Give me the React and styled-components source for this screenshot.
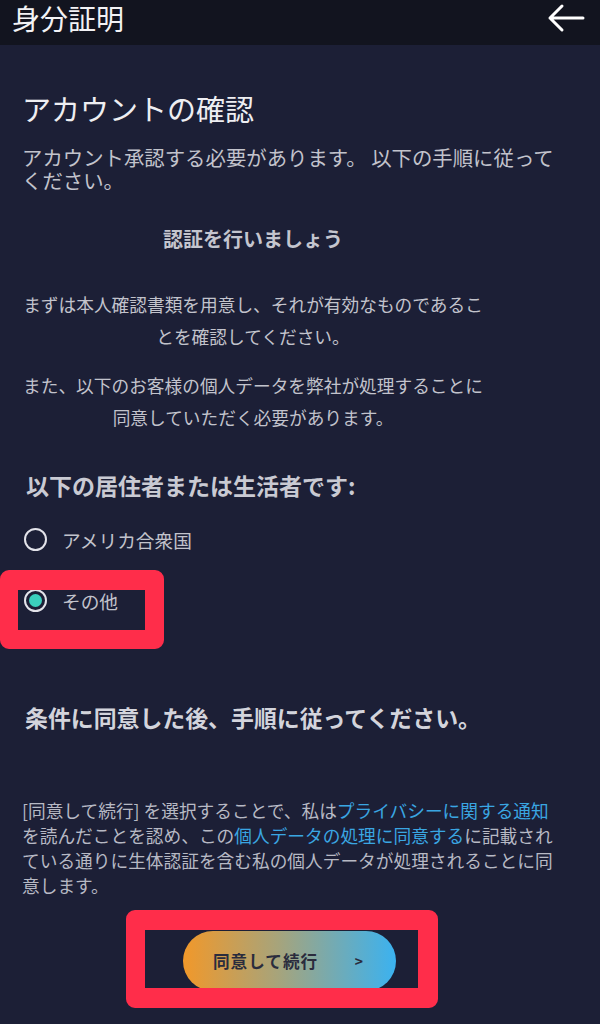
import React from "react";
import styled, { createGlobalStyle } from "styled-components";

const Global = createGlobalStyle`
  html, body { margin: 0; padding: 0; background: #1c1f36; }
  body { font-family: "Noto Sans CJK JP", "Noto Sans", sans-serif; }
`;

const Page = styled.div`
  position: relative;
  width: 600px;
  height: 1024px;
  overflow: hidden;
  background: #1c1f36;
  color: #c9cad3;
`;

const Header = styled.header`
  height: 45px;
  background: #12141f;
  display: flex;
  align-items: flex-start;
  justify-content: space-between;
  padding: 1px 14px 0 12px;
  box-sizing: border-box;
`;

const HeaderTitle = styled.h1`
  margin: 0;
  font-size: 28px;
  line-height: 34px;
  font-weight: 400;
  color: #f2f2f5;
`;

const BackIcon = styled.svg`
  width: 40px;
  height: 30px;
  margin-top: 2px;
`;

const Content = styled.main`
  padding: 0 22px;
  display: flex;
  flex-direction: column;
`;

const Title = styled.h2`
  margin: 44px 0 0;
  font-size: 29px;
  line-height: 38px;
  font-weight: 400;
  color: #eeeef2;
`;

const Lead = styled.p`
  margin: 19px 0 0;
  width: 545px;
  font-size: 20.4px;
  line-height: 23px;
  color: #c2c3cc;
`;

const Subhead = styled.h3`
  margin: 33px 0 0;
  width: 462px;
  text-align: center;
  font-size: 20px;
  line-height: 28px;
  font-weight: 700;
  color: #c4c5ce;
`;

const CenterPara = styled.p`
  margin: ${(p) => p.$mt}px 0 0;
  width: 462px;
  text-align: center;
  font-size: 17.7px;
  line-height: 32px;
  color: #c2c3cc;
`;

const Question = styled.h3`
  margin: 37px 0 0 4px;
  font-size: 23px;
  line-height: 30px;
  font-weight: 700;
  color: #c9cad3;
`;

const Options = styled.div`
  display: flex;
  flex-direction: column;
  gap: 36px;
  margin-top: 27px;
`;

const Option = styled.label`
  display: flex;
  align-items: center;
  gap: 15px;
  height: 25px;
  font-size: 18.7px;
  color: #c2c3cc;
  padding-left: 2px;
`;

const Radio = styled.span`
  width: 23px;
  height: 23px;
  box-sizing: border-box;
  border-radius: 50%;
  border: 2.5px solid #e3e3ea;
  display: flex;
  align-items: center;
  justify-content: center;
  &::after {
    content: "";
    width: 13px;
    height: 13px;
    border-radius: 50%;
    background: ${(p) => (p.$checked ? "#3bd0bd" : "transparent")};
  }
`;

const Conditions = styled.h3`
  margin: 88px 0 0 3px;
  font-size: 22.9px;
  line-height: 32px;
  font-weight: 700;
  color: #d3d4dc;
`;

const Legal = styled.p`
  margin: 65px 0 0;
  width: 540px;
  font-size: 17.7px;
  line-height: 25px;
  color: #b7b9c4;
`;

const Link = styled.span`
  color: #3aa6e2;
`;

const ButtonRow = styled.div`
  display: flex;
  padding-left: 161px;
  margin-top: 33px;
`;

const Button = styled.button`
  width: 213px;
  height: 60px;
  border: none;
  border-radius: 30px;
  background: linear-gradient(90deg, #f1982a 0%, #a6a47c 45%, #3bb2f0 100%);
  display: flex;
  align-items: center;
  padding: 0 30px;
  box-sizing: border-box;
  font-family: inherit;
  font-size: 16.6px;
  font-weight: 700;
  color: #2a2c3d;
  letter-spacing: 1px;
`;

const Chevron = styled.span`
  margin-left: auto;
  margin-right: 2px;
  font-size: 14px;
  font-weight: 700;
`;

const Highlight = styled.div`
  position: absolute;
  left: ${(p) => p.$x}px;
  top: ${(p) => p.$y}px;
  width: ${(p) => p.$w}px;
  height: ${(p) => p.$h}px;
  box-sizing: border-box;
  border-radius: 9px;
  border: solid #ff2d4a;
  border-width: ${(p) => p.$bt}px ${(p) => p.$br}px ${(p) => p.$bb}px ${(p) => p.$bl}px;
  pointer-events: none;
`;

export default function App() {
  return (
    <Page>
      <Global />
      <Header>
        <HeaderTitle>身分証明</HeaderTitle>
        <BackIcon viewBox="0 0 40 30" fill="none" stroke="#ffffff" strokeWidth="3" strokeLinecap="round" strokeLinejoin="round">
          <path d="M37 15H4M16 3L4 15l12 12" />
        </BackIcon>
      </Header>
      <Content>
        <Title>アカウントの確認</Title>
        <Lead>アカウント承認する必要があります。 以下の手順に従ってください。</Lead>
        <Subhead>認証を行いましょう</Subhead>
        <CenterPara $mt={35}>まずは本人確認書類を用意し、それが有効なものであることを確認してください。</CenterPara>
        <CenterPara $mt={17}>また、以下のお客様の個人データを弊社が処理することに同意していただく必要があります。</CenterPara>
        <Question>以下の居住者または生活者です:</Question>
        <Options>
          <Option>
            <Radio />
            アメリカ合衆国
          </Option>
          <Option>
            <Radio $checked />
            その他
          </Option>
        </Options>
        <Conditions>条件に同意した後、手順に従ってください。</Conditions>
        <Legal>
          [同意して続行] を選択することで、私は<Link>プライバシーに関する通知</Link>を読んだことを認め、この<Link>個人データの処理に同意する</Link>に記載されている通りに生体認証を含む私の個人データが処理されることに同意します。
        </Legal>
        <ButtonRow>
          <Button>
            同意して続行
            <Chevron>&gt;</Chevron>
          </Button>
        </ButtonRow>
      </Content>
      <Highlight $x={0} $y={570} $w={164} $h={79} $bt={20} $br={19} $bb={19} $bl={18} />
      <Highlight $x={126} $y={910} $w={312} $h={98} $bt={20} $br={20} $bb={20} $bl={19} />
    </Page>
  );
}
